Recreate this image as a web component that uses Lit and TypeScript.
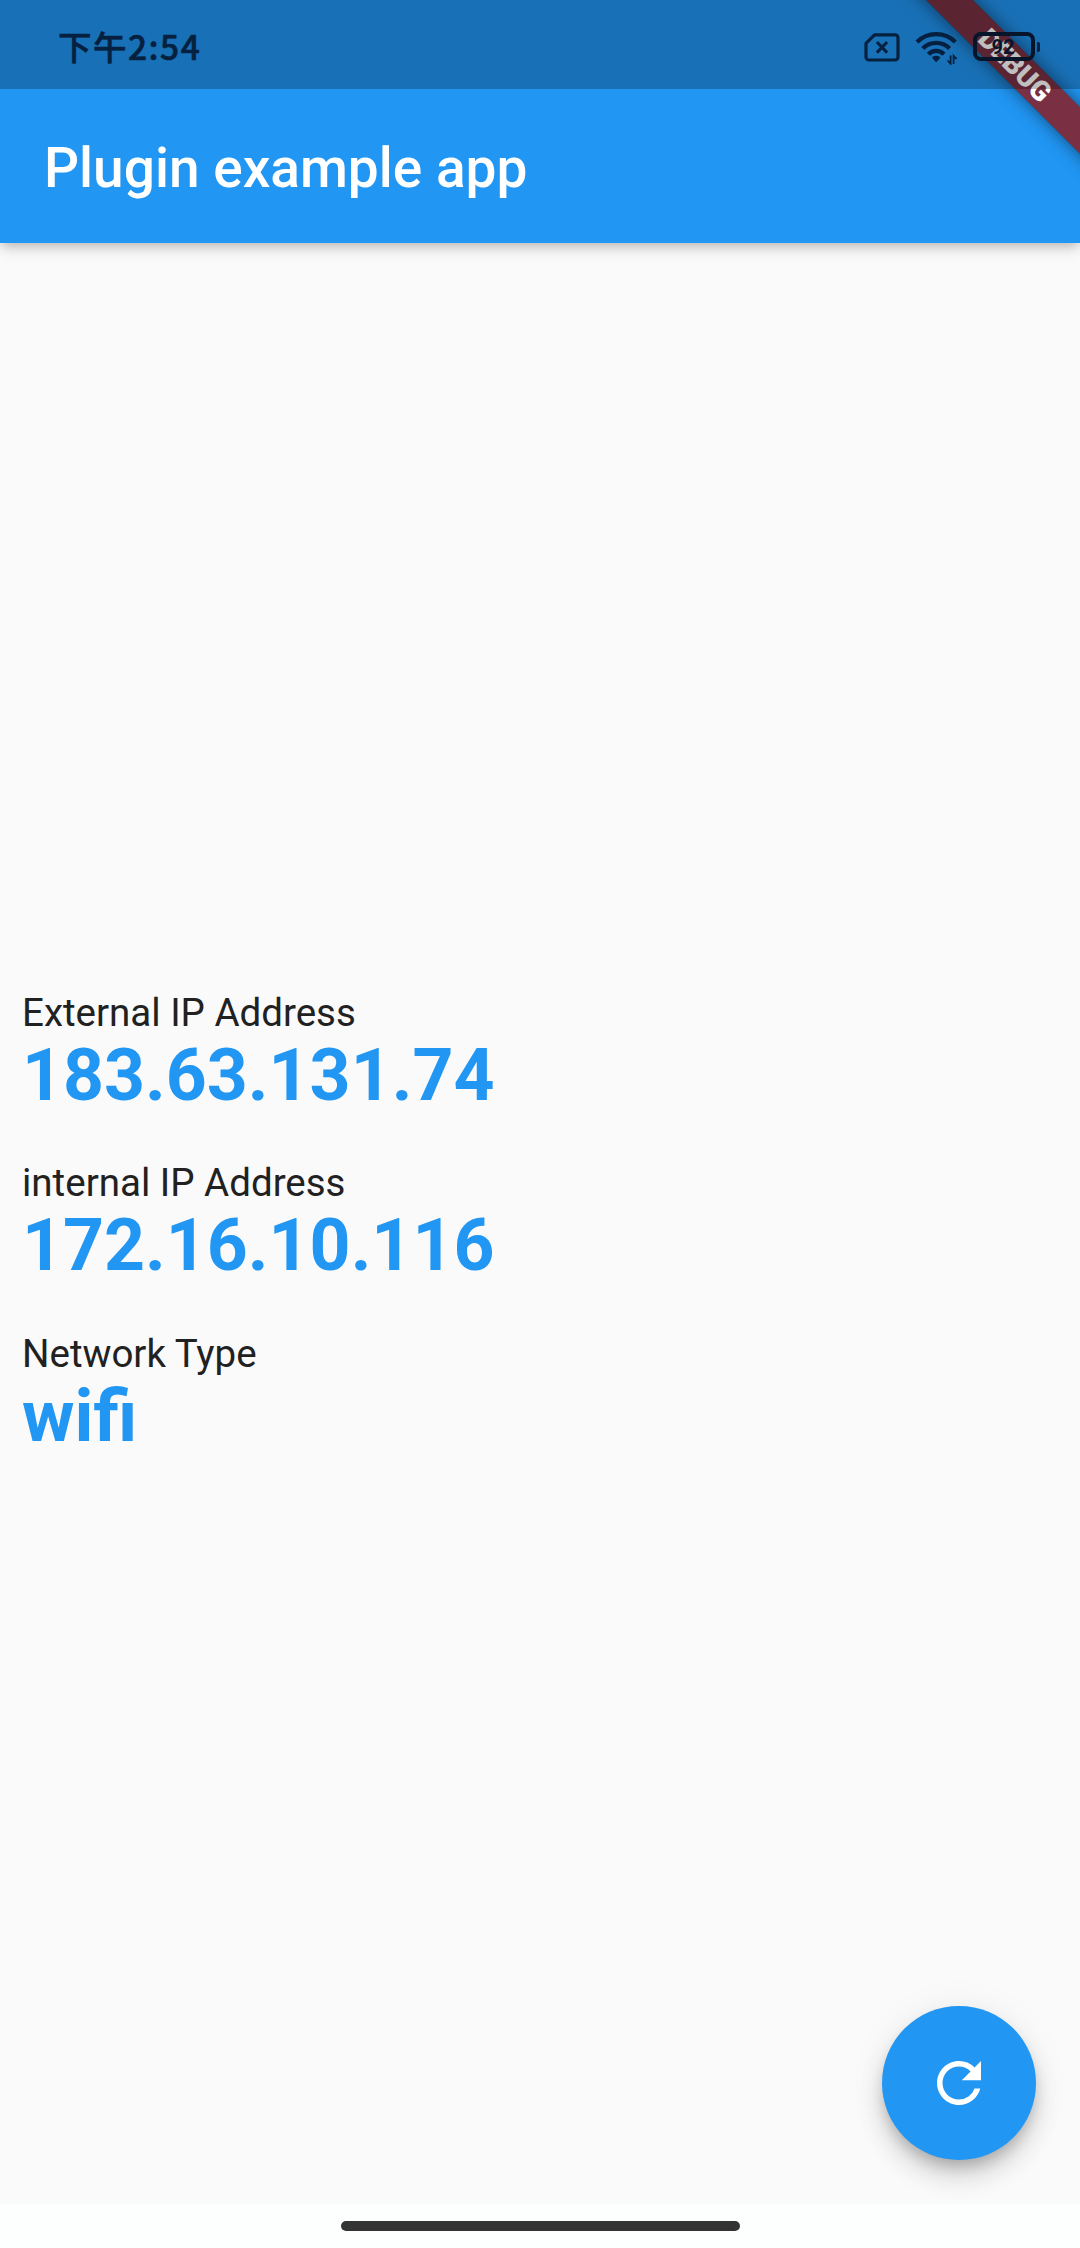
import { LitElement, html, css } from "lit";
import { customElement, property } from "lit/decorators.js";

interface Entry {
  label: string;
  value: string;
}

const ENTRIES: Entry[] = [
  { label: "External IP Address", value: "183.63.131.74" },
  { label: "internal IP Address", value: "172.16.10.116" },
  { label: "Network Type", value: "wifi" },
];

@customElement("status-bar")
class StatusBar extends LitElement {
  static styles = css`
    :host {
      box-sizing: border-box;
      display: flex;
      align-items: flex-start;
      justify-content: space-between;
      height: 89px;
      padding: 32px 40px 0 58px;
      background: rgba(0, 0, 0, 0.25);
      color: #06213f;
    }
    .time {
      font: 500 33.5px/27px "Noto Sans CJK SC", sans-serif;
      letter-spacing: 1.5px;
      -webkit-text-stroke: 0.6px #06213f;
    }
    .icons {
      display: flex;
      align-items: flex-start;
      gap: 15px;
    }
    svg {
      display: block;
    }
    .battery {
      display: flex;
      align-items: center;
      gap: 2px;
    }
    .cell {
      box-sizing: border-box;
      display: flex;
      align-items: center;
      justify-content: center;
      width: 62px;
      height: 29px;
      padding-right: 2px;
      border: 4px solid #06152a;
      border-radius: 8px;
      color: #06152a;
      font: 700 20px/20px Roboto, sans-serif;
    }
    .tip {
      width: 3px;
      height: 10px;
      border-radius: 0 2px 2px 0;
      background: #06213f;
    }
  `;

  render() {
    return html`
      <span class="time">下午2:54</span>
      <div class="icons">
        <svg width="36" height="30" viewBox="0 -1 36 30" fill="none" stroke="#06213f">
          <path d="M10.5 1.8H31a3 3 0 0 1 3 3V24a3 3 0 0 1-3 3H5a3 3 0 0 1-3-3V10.3Z" stroke-width="3.2" stroke-linejoin="round" />
          <path d="M12.9 9l10.2 10.6M23.1 9L12.9 19.6" stroke-width="3" />
        </svg>
        <svg width="43" height="33" viewBox="0 0 43 33" fill="none" stroke="#06213f">
          <path d="M2 10a27.4 27.4 0 0 1 38.4 0" stroke-width="4.3" />
          <path d="M7.8 16.4a19 19 0 0 1 26.8 0" stroke-width="4.3" />
          <path d="M13.4 22.2a10.8 10.8 0 0 1 15.6 0" stroke-width="4.3" />
          <path d="M21.2 23.8c2.2 0 3.5.8 4.2 1.9l-4.2 4.6-4.2-4.6c.7-1.1 2-1.9 4.2-1.9Z" fill="#06213f" stroke="none" />
          <path d="M35.6 23.5v8.2l-3-3.2M38.6 32v-8.2l3 3.2" stroke-width="1.8" />
        </svg>
        <div class="battery"><span class="cell">92</span><span class="tip"></span></div>
      </div>
    `;
  }
}

@customElement("network-entry")
class NetworkEntry extends LitElement {
  @property() label = "";
  @property() value = "";

  static styles = css`
    :host {
      display: block;
    }
    .label {
      font-size: 38.5px;
      line-height: 48px;
      color: #212121;
    }
    .value {
      margin-top: -3px;
      font-size: 71.5px;
      line-height: 84px;
      font-weight: 700;
      color: #2196f3;
    }
  `;

  render() {
    return html`
      <div class="label">${this.label}</div>
      <div class="value">${this.value}</div>
    `;
  }
}

@customElement("app-root")
class AppRoot extends LitElement {
  static styles = css`
    :host {
      position: relative;
      display: flex;
      flex-direction: column;
      height: 2248px;
      overflow: hidden;
      background: #fafafa;
      font-family: Roboto, sans-serif;
    }
    .app-bar {
      box-sizing: border-box;
      display: flex;
      align-items: center;
      height: 243px;
      padding: 93px 44px 0;
      background: #2196f3;
      box-shadow: 0 5px 11px -3px rgba(0, 0, 0, 0.2), 0 11px 14px rgba(0, 0, 0, 0.04),
        0 3px 14px rgba(0, 0, 0, 0.08);
    }
    .title {
      margin: 0;
      font-size: 55px;
      line-height: 64px;
      font-weight: 500;
      color: #fff;
    }
    .content {
      flex: 1;
      display: flex;
      flex-direction: column;
      justify-content: center;
      gap: 41.5px;
      padding: 0 22px;
    }
    .nav {
      display: flex;
      justify-content: center;
      box-sizing: border-box;
      height: 44px;
      padding-top: 17px;
      background: #fdfefe;
    }
    .handle {
      width: 399px;
      height: 10px;
      border-radius: 5px;
      background: #333;
    }
    .refresh {
      position: absolute;
      right: 44px;
      bottom: 88px;
      display: flex;
      align-items: center;
      justify-content: center;
      width: 154px;
      height: 154px;
      padding: 0;
      border: 0;
      border-radius: 50%;
      background: #2196f3;
      box-shadow: 0 9px 14px -3px rgba(0, 0, 0, 0.2), 0 17px 27px rgba(0, 0, 0, 0.14),
        0 3px 40px rgba(0, 0, 0, 0.06);
      clip-path: inset(-60px -44px -44px -60px);
    }
    .corner {
      position: absolute;
      top: 0;
      right: 0;
      width: 260px;
      height: 260px;
      overflow: hidden;
    }
    .ribbon {
      position: absolute;
      left: 45px;
      top: 48.5px;
      width: 300px;
      height: 33px;
      transform: rotate(45deg);
      background: linear-gradient(rgba(183, 28, 28, 0.63), rgba(183, 28, 28, 0.63)), rgba(0, 0, 0, 0.45);
      box-shadow: 0 0 16.5px rgba(0, 0, 0, 0.5);
      color: #fff;
      font-size: 28px;
      line-height: 33px;
      font-weight: 900;
      text-align: center;
    }
    status-bar {
      position: absolute;
      top: 0;
      left: 0;
      right: 0;
    }
  `;

  render() {
    return html`
      <header class="app-bar"><h1 class="title">Plugin example app</h1></header>
      <main class="content">
        ${ENTRIES.map((e) => html`<network-entry .label=${e.label} .value=${e.value}></network-entry>`)}
      </main>
      <footer class="nav"><div class="handle"></div></footer>
      <button class="refresh" aria-label="Refresh">
        <svg width="66" height="66" viewBox="0 0 24 24" fill="#fff">
          <path d="M17.65 6.35A7.958 7.958 0 0 0 12 4c-4.42 0-7.99 3.58-7.99 8s3.57 8 7.99 8c3.73 0 6.84-2.55 7.73-6h-2.08A5.99 5.99 0 0 1 12 18c-3.31 0-6-2.69-6-6s2.69-6 6-6c1.66 0 3.14.69 4.22 1.78L13 11h7V4l-2.35 2.35z" />
        </svg>
      </button>
      <div class="corner"><div class="ribbon">DEBUG</div></div>
      <status-bar></status-bar>
    `;
  }
}
